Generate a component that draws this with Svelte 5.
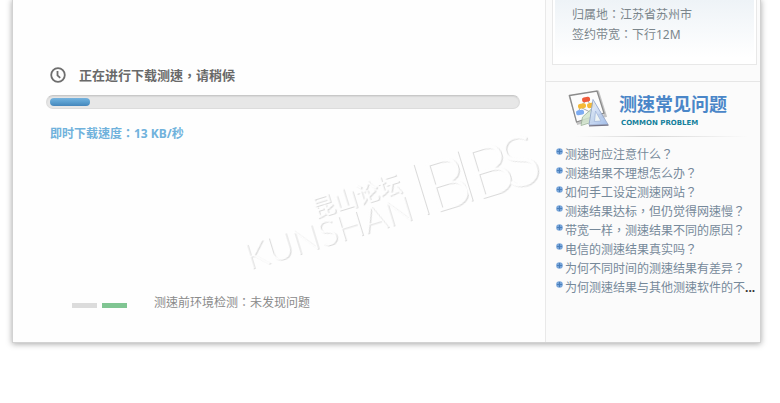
<script lang="ts">
	const progress = 8;

	const info = [
		{ label: '归属地', value: '江苏省苏州市' },
		{ label: '签约带宽', value: '下行12M' }
	];

	const questions = [
		{ text: '测速时应注意什么？' },
		{ text: '测速结果不理想怎么办？' },
		{ text: '如何手工设定测速网站？' },
		{ text: '测速结果达标，但仍觉得网速慢？' },
		{ text: '带宽一样，测速结果不同的原因？' },
		{ text: '电信的测速结果真实吗？' },
		{ text: '为何不同时间的测速结果有差异？' },
		{ text: '为何测速结果与其他测速软件的不', more: true }
	];
</script>

<div class="page">
	<div class="card">
		<main>
			<h1>
				<svg class="clock" viewBox="0 0 16 16" aria-hidden="true">
					<circle cx="8" cy="8" r="6.8" />
					<path d="M7.5 4v4.3l2.7 2.5" />
				</svg>
				正在进行下载测速，请稍候
			</h1>
			<div class="track" role="progressbar" aria-valuenow={progress} aria-label="下载测速">
				<div class="fill" style="width: {progress}%"></div>
			</div>
			<p class="speed">即时下载速度：13 KB/秒</p>
			<div class="check">
				<span class="bar"></span>
				<span class="bar ok"></span>
				<p>测速前环境检测：未发现问题</p>
			</div>

			<svg class="watermark" viewBox="0 0 310 160" aria-hidden="true">
				<g transform="translate(17 149) rotate(-17)">
					<text class="kunshan" x="-3" y="0">KUNSHAN</text>
					<text class="forum" x="75" y="-31">昆山论坛</text>
					<path d="M184 -53V-1" />
					<text class="bbs" x="189" y="0">B</text>
					<path d="M230 -53V-1" />
					<text class="bbs" x="234" y="0">B</text>
					<text class="bbs" x="269" y="0">S</text>
				</g>
			</svg>
		</main>

		<aside>
			<div class="info">
				{#each info as row}
					<p>{row.label}：{row.value}</p>
				{/each}
			</div>

			<section>
				<header>
					<svg class="icon" viewBox="0 0 44 40" aria-hidden="true">
						<defs>
							<linearGradient id="ruler" x1="0" y1="0" x2="1" y2="1">
								<stop offset="0" stop-color="#f2f7ff" />
								<stop offset="1" stop-color="#98b6e6" />
							</linearGradient>
						</defs>
						<path d="M3 7.5 31 3l7.5 24L11 34.500z" fill="#ddd" stroke="#c4c4c4" stroke-width="2.500" />
						<path d="M2.500 6.500 30 2l7 22L9.500 33z" fill="#fcfcfc" stroke="#8b8b8b" stroke-width="1.300" />
						<path d="M19 12 12 18M21 12l3 5M13 19l-2 5M15 19l8 4" stroke="#aaa" fill="none" />
						<rect x="15" y="8" width="8" height="5" rx="2" fill="#ee5a3a" transform="rotate(-10 19 10)" />
						<rect x="11" y="14.500" width="8" height="5" rx="2" fill="#f5b936" transform="rotate(-10 15 17)" />
						<rect x="20" y="14" width="8" height="5" rx="2" fill="#f5b936" transform="rotate(-10 23 16)" />
						<rect x="9" y="21" width="8" height="5" rx="2" fill="#7dacf2" transform="rotate(-10 13 23)" />
						<path d="M14 36.500 15.500 28 24 20.500 32 31z" fill="#d3e6ce" stroke="#9db39a" opacity=".85" />
						<path d="M26 10.500 41 35.500 22 36z" fill="url(#ruler)" stroke="#93a6ca" opacity=".9" />
						<path d="M28.500 22 34 32l-6.500.5z" fill="#eef4f4" stroke="#a3b8da" stroke-width=".8" />
						<path d="M22 36.800 41.500 36.200" stroke="#778" stroke-width="1.200" />
					</svg>
					<div class="title">
						<h2>测速常见问题</h2>
						<p class="sub">COMMON PROBLEM</p>
					</div>
				</header>
				<hr />
				<ul>
					{#each questions as q}
						<li>
							<svg class="dot" viewBox="0 0 7 7" aria-hidden="true">
								<circle cx="3.500" cy="3.500" r="3.300" fill="#78a5da" />
								<path d="M3.500 1v5M1 3.500h5" stroke="#4a7fba" />
							</svg>
							<a href="#faq">{q.text}</a>{#if q.more}<b>...</b>{/if}
						</li>
					{/each}
				</ul>
			</section>
		</aside>
	</div>
</div>

<style>
	:global(body) {
		margin: 0;
		background: #fff;
	}
	h1, h2, p, ul {
		margin: 0;
		padding: 0;
	}
	.page {
		padding: 0 20px 60px 13px;
		font-family: 'Noto Sans', 'Noto Sans CJK TC', sans-serif;
		font-size: 12px;
		line-height: 20px;
		color: #8b8b8b;
	}
	.card {
		display: flex;
		background: #fefefe;
		box-shadow: 0 0 0 1px #d2d2d2, 0 1px 6px 1px rgba(0, 0, 0, .35);
	}

	main {
		position: relative;
		flex: 1;
		min-width: 0;
		padding: 65px 25px 0 33px;
	}
	h1 {
		display: flex;
		align-items: center;
		gap: 13px;
		padding-left: 4px;
		font-size: 13px;
		font-weight: bold;
		color: #696969;
	}
	.clock {
		width: 16px;
		height: 16px;
		fill: none;
		stroke: #6e6e6e;
		stroke-width: 1.8;
	}
	.track {
		box-sizing: border-box;
		height: 14px;
		margin-top: 10px;
		padding: 2px 3px;
		border: 1px solid #dcdcdc;
		border-top: 1px solid #c8c8c8;
		border-radius: 7px;
		background: #e7e7e7;
		box-shadow: inset 0 1px 1px #d8d8d8;
	}
	.fill {
		min-width: 40px;
		height: 8px;
		border-radius: 4px;
		background: linear-gradient(#76b3de, #5a9fd0 50%, #4586bb);
	}
	.speed {
		margin-top: 15px;
		padding-left: 4px;
		font-weight: bold;
		color: #70b2dc;
	}
	.check {
		display: flex;
		align-items: center;
		gap: 5px;
		margin-top: 149px;
		padding-left: 26px;
	}
	.check p {
		padding-left: 22px;
	}
	.bar {
		width: 25px;
		height: 5px;
		margin-top: 4px;
		background: #dcdcdc;
	}
	.bar.ok {
		background: #80c592;
	}

	.watermark {
		position: absolute;
		top: 120px;
		right: 0;
		width: 310px;
		height: 160px;
		overflow: visible;
		fill: #fefefe;
		pointer-events: none;
	}
	.watermark text,
	.watermark path {
		filter: drop-shadow(1px 1px 0 rgba(0, 0, 0, .14));
	}
	.watermark path {
		stroke: #fefefe;
		stroke-width: 2;
	}
	.kunshan {
		font: 300 36px Lato, sans-serif;
	}
	.forum {
		font: 500 23px 'Noto Sans CJK SC', sans-serif;
	}
	.bbs {
		font: 300 70px Lato, sans-serif;
	}

	aside {
		flex: 0 0 214px;
		min-height: 342px;
		border-left: 1px solid #e9e9e9;
		background: #fbfbfb;
	}
	.info {
		margin: 0 3px 0 6px;
		padding: 5px 19px 19px;
		border: 1px solid #e8e8e8;
		border-top: none;
		background: linear-gradient(#eef3f7, #fff 90%);
		box-shadow: inset 2px 0 0 #fff, inset -2px 0 0 #fff;
		color: #7b868c;
	}
	section {
		margin-top: 16px;
		border-top: 1px solid #e6e6e6;
	}
	header {
		display: flex;
		gap: 8px;
		padding: 7px 0 0 21px;
	}
	.icon {
		width: 44px;
		height: 40px;
	}
	.title {
		padding-top: 3px;
	}
	h2 {
		font-size: 18px;
		line-height: 25px;
		font-weight: bold;
		color: #4a86c8;
	}
	.sub {
		padding-left: 2px;
		font: bold 7px/12px 'DejaVu Sans', sans-serif;
		color: #14809c;
	}
	hr {
		height: 1px;
		margin: 7px 12px 0 30px;
		border: none;
		background: linear-gradient(90deg, transparent, #d4d4d4 40%, transparent);
	}
	ul {
		padding: 8px 0 0 10px;
		list-style: none;
	}
	li {
		display: flex;
		gap: 2px;
		line-height: 19px;
		white-space: nowrap;
		color: #333;
	}
	.dot {
		width: 7px;
		height: 7px;
		margin-top: 3px;
	}
	a {
		color: #76899a;
		text-decoration: none;
	}
	b {
		margin-left: -2px;
	}
</style>
